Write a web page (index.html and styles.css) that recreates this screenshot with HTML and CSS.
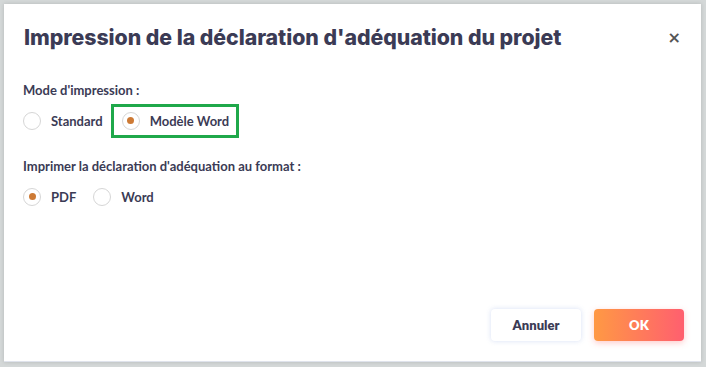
FILE: index.html
```html
<!DOCTYPE html>
<html lang="fr">
<head>
<meta charset="utf-8">
<link rel="stylesheet" href="styles.css">
</head>
<body>
<div class="modal">
  <div class="header">
    <h1 class="title">Impression de la déclaration d'adéquation du projet</h1>
    <span class="close">×</span>
  </div>
  <div class="body">
    <div class="label">Mode d'impression :</div>
    <div class="options">
      <label class="opt"><span class="radio"></span><span>Standard</span></label>
      <label class="opt highlight"><span class="radio checked"></span><span>Modèle Word</span></label>
    </div>
    <div class="label second">Imprimer la déclaration d'adéquation au format :</div>
    <div class="options">
      <label class="opt"><span class="radio checked"></span><span>PDF</span></label>
      <label class="opt"><span class="radio"></span><span>Word</span></label>
    </div>
  </div>
  <div class="footer">
    <button class="btn cancel">Annuler</button>
    <button class="btn ok">OK</button>
  </div>
</div>
</body>
</html>
```
FILE: styles.css
```css
html, body {
  margin: 0;
  padding: 0;
  background: #d4d8d8;
  width: 706px;
  height: 367px;
  overflow: hidden;
}
body {
  padding: 4px 5px 5px 4px;
  box-sizing: border-box;
  font-family: "Lato", sans-serif;
}
.modal {
  background: #fff;
  width: 697px;
  height: 358px;
  box-sizing: border-box;
  box-shadow: 0 0 4px rgba(0,0,0,0.15);
  border-bottom: 1px solid #dfe3ec;
  display: flex;
  flex-direction: column;
  position: relative;
}
.header {
  display: flex;
  align-items: center;
  justify-content: space-between;
  padding: 18px 20px 0 20px;
  height: 30px;
}
.title {
  margin: 0;
  font-family: "Inter", sans-serif;
  font-weight: 800;
  font-size: 21.3px;
  color: #3b3b55;
  letter-spacing: -0.05px;
}
.close {
  font-family: "DejaVu Sans", sans-serif;
  font-size: 16px;
  color: #555;
  font-weight: bold;
}
.body {
  padding: 30px 19px 0 19px;
  flex: 1;
}
.label {
  font-family: "Lato", sans-serif;
  font-weight: 700;
  font-size: 13px;
  color: #3b3b55;
  line-height: 16px;
}
.label.second {
  margin-top: 21px;
}
.options {
  display: flex;
  align-items: center;
  margin-top: 6px;
  height: 33px;
}
.options + .label.second + .options {
  margin-top: 6px;
}
.opt {
  display: flex;
  align-items: center;
  gap: 10px;
  font-family: "Lato", sans-serif;
  font-weight: 700;
  font-size: 13px;
  color: #3b3b55;
  margin-right: 17px;
}
.highlight {
  border: 3px solid #1fa84a;
  padding: 5px 7px 5px 8px;
  margin-left: -9px;
}
.radio {
  width: 18px;
  height: 18px;
  border: 1px solid #d6d6d6;
  border-radius: 50%;
  box-sizing: border-box;
  display: flex;
  align-items: center;
  justify-content: center;
  background: #fff;
}
.radio.checked::after {
  content: "";
  width: 7px;
  height: 7px;
  border-radius: 50%;
  background: #cd7a35;
}
.footer {
  display: flex;
  justify-content: flex-end;
  gap: 13px;
  padding: 0 17px 20px 0;
}
.btn {
  width: 90px;
  height: 32px;
  border: none;
  border-radius: 4px;
  font-family: "Lato", sans-serif;
  font-weight: 800;
  font-size: 13px;
}
.cancel {
  background: #fff;
  color: #3b3b55;
  box-shadow: 0 0 5px rgba(120,150,220,0.3);
}
.ok {
  background: linear-gradient(90deg, #ff9944, #ff5f6f);
  color: #fff;
  box-shadow: 0 2px 6px rgba(255,110,110,0.35);
}
```
